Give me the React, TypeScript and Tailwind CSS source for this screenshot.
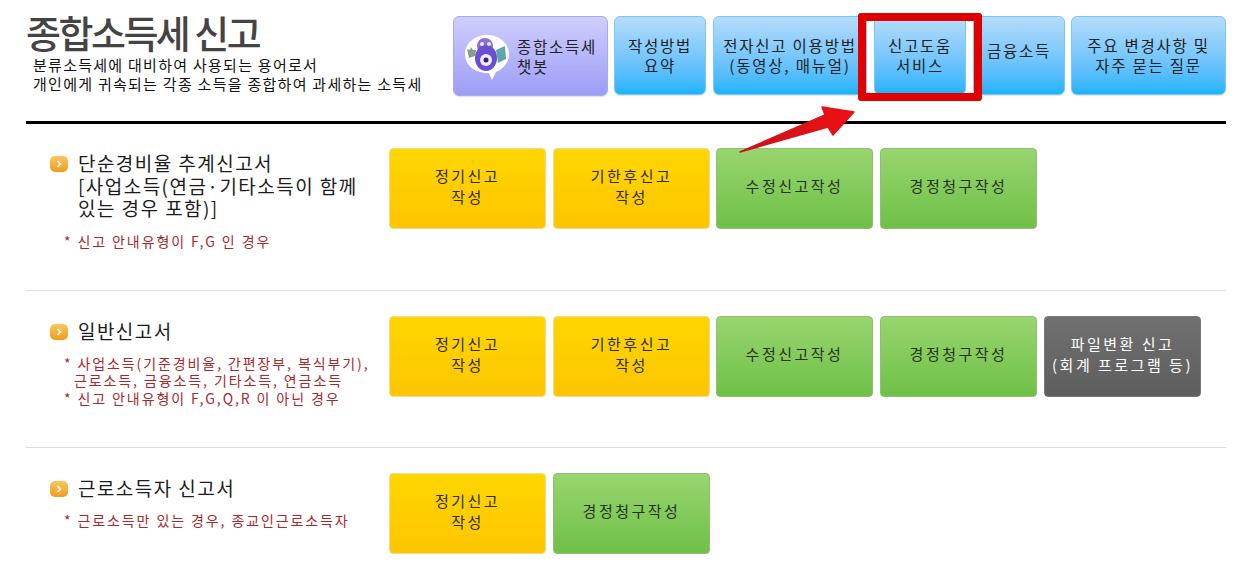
import { type ReactNode } from 'react';

const font = "font-['Noto_Sans_CJK_KR','Liberation_Sans',sans-serif]";

const topBlue = 'border-[#7cc8ee] from-[#b5dcfb] to-[#17b2fb]';

const variants = {
  yellow: 'border-[#f0dc90] from-[#ffd600] to-[#fdc500] text-[#2e2e20]',
  green: 'border-[#8fbf72] from-[#98d56f] to-[#6fc047] text-[#24341c]',
  gray: 'border-[#777777] from-[#707070] to-[#5e5e5e] text-white',
};

function TopButton({ width, className, children }: { width: string; className?: string; children: ReactNode }) {
  return (
    <div
      className={`flex h-[79px] shrink-0 items-center justify-center rounded-md border bg-linear-to-b pb-[2px] text-center text-[15.5px] leading-[20px] tracking-[1.75px] text-[#222222] shadow-[0_1px_1px_rgba(0,0,0,0.12)] ${width} ${className ?? topBlue}`}
    >
      <div>{children}</div>
    </div>
  );
}

function ActionButton({ kind, className, children }: { kind: keyof typeof variants; className?: string; children: ReactNode }) {
  return (
    <div
      className={`flex h-[81px] w-[157px] shrink-0 items-center justify-center rounded-[4px] border bg-linear-to-b pb-[6px] text-center text-[15px] leading-[21px] tracking-[2.5px] ${variants[kind]} ${className ?? ''}`}
    >
      <div>{children}</div>
    </div>
  );
}

function Heading({ children }: { children: ReactNode }) {
  return (
    <div className="flex items-start gap-[10px] pl-6">
      <span className="mt-2 flex h-[16px] w-[18px] shrink-0 items-center justify-center rounded-[5px] bg-linear-to-b from-[#fcc65c] to-[#f09c1c]">
        <svg width="8" height="8" viewBox="0 0 8 8" fill="none" stroke="#fff" strokeWidth="1.6">
          <path d="M2.5 1 5.5 4 2.5 7" />
        </svg>
      </span>
      <div className="mt-1 text-[19px] leading-[22.5px] tracking-[1.45px] text-[#1c1c1c]">{children}</div>
    </div>
  );
}

function Note({ className, children }: { className?: string; children: ReactNode }) {
  return <div className={`pl-[38px] text-[14px] leading-[17.5px] tracking-[1.9px] text-[#a8282c] ${className ?? ''}`}>{children}</div>;
}

function Mascot() {
  return (
    <svg width="48" height="50" viewBox="0 0 48 50" className="shrink-0">
      <path d="M24 4c12 0 22 8 22 19 0 9-6 15-13 18l-4 8-3-7C11 42 2 34 2 23 2 12 12 4 24 4z" fill="#fff" />
      <path d="M4 18l3 1 1-3 2 3 3 0-1 6-6 2z" fill="#8d9a86" />
      <path d="M33 19l9-4 1 13-8 4z" fill="#5fa6a8" />
      <circle cx="22" cy="15" r="8" fill="#8a6fd8" />
      <ellipse cx="23" cy="27" rx="11" ry="13" fill="#6a4fd0" />
      <circle cx="19" cy="13" r="2" fill="#e9e6fb" />
      <circle cx="26" cy="13" r="2" fill="#e9e6fb" />
      <circle cx="23" cy="29" r="6" fill="#efeafc" />
      <circle cx="23" cy="29" r="2.5" fill="#33236f" />
    </svg>
  );
}

export default function App() {
  return (
    <div className={`relative h-[565px] w-[1237px] overflow-hidden bg-white pl-[26px] pr-[11px] ${font}`}>
      <header className="flex h-[121px] pt-4">
        <div className="w-[427px] shrink-0">
          <h1 className="-mt-[6px] text-[38px] leading-[44px] font-medium tracking-[-2.5px] text-[#444444]">종합소득세 신고</h1>
          <div className="mt-px pl-[7px] text-[15px] leading-[19px] tracking-[1.27px] whitespace-nowrap text-[#111111]">
            <div>분류소득세에 대비하여 사용되는 용어로서</div>
            <div>개인에게 귀속되는 각종 소득을 종합하여 과세하는 소득세</div>
          </div>
        </div>
        <div className="flex items-start">
          <div className="flex h-[80px] w-[155px] shrink-0 items-center gap-[6px] rounded-md border border-[#a9a9ec] bg-linear-to-b from-[#cfcdfc] to-[#9d9df6] pl-[9px] text-[15.5px] leading-[20px] tracking-[1.75px] whitespace-nowrap text-[#222222] shadow-[0_1px_1px_rgba(0,0,0,0.12)]">
            <Mascot />
            <div>
              종합소득세
              <br />
              챗봇
            </div>
          </div>
          <TopButton width="ml-[6px] w-[92px]">
            작성방법
            <br />
            요약
          </TopButton>
          <TopButton width="ml-[7px] w-[154px]">
            전자신고 이용방법
            <br />
            (동영상, 매뉴얼)
          </TopButton>
          <TopButton width="ml-[7px] w-[92px]">
            신고도움
            <br />
            서비스
          </TopButton>
          <TopButton width="ml-[7px] w-[92px]">
            <span className="relative -top-[5px]">금융소득</span>
          </TopButton>
          <TopButton width="ml-[6px] w-[155px]">
            주요 변경사항 및
            <br />
            자주 묻는 질문
          </TopButton>
        </div>
      </header>
      <div className="h-[3px] bg-black" />

      <section className="flex h-[167px] items-start border-b border-[#dddddd] pt-[24px]">
        <div className="w-[363px] shrink-0">
          <Heading>
            단순경비율 추계신고서
            <br />
            [사업소득(연금·기타소득이 함께
            <br />
            있는 경우 포함)]
          </Heading>
          <Note className="mt-[13px]">* 신고 안내유형이 F,G 인 경우</Note>
        </div>
        <div className="flex gap-[7px]">
          <ActionButton kind="yellow">
            정기신고
            <br />
            작성
          </ActionButton>
          <ActionButton kind="yellow">
            기한후신고
            <br />
            작성
          </ActionButton>
          <ActionButton kind="green" className="-ml-px">
            수정신고작성
          </ActionButton>
          <ActionButton kind="green">경정청구작성</ActionButton>
        </div>
      </section>

      <section className="flex h-[157px] items-start border-b border-[#dddddd] pt-[25px]">
        <div className="w-[363px] shrink-0">
          <Heading>일반신고서</Heading>
          <Note className="mt-[12px]">
            * 사업소득(기준경비율, 간편장부, 복식부기),
            <br />
            <span className="pl-[10px]">근로소득, 금융소득, 기타소득, 연금소득</span>
            <br />* 신고 안내유형이 F,G,Q,R 이 아닌 경우
          </Note>
        </div>
        <div className="flex gap-[7px]">
          <ActionButton kind="yellow">
            정기신고
            <br />
            작성
          </ActionButton>
          <ActionButton kind="yellow">
            기한후신고
            <br />
            작성
          </ActionButton>
          <ActionButton kind="green" className="-ml-px">
            수정신고작성
          </ActionButton>
          <ActionButton kind="green">경정청구작성</ActionButton>
          <ActionButton kind="gray">
            파일변환 신고
            <br />
            (회계 프로그램 등)
          </ActionButton>
        </div>
      </section>

      <section className="flex items-start pt-[25px]">
        <div className="w-[363px] shrink-0">
          <Heading>근로소득자 신고서</Heading>
          <Note className="mt-[12px]">* 근로소득만 있는 경우, 종교인근로소득자</Note>
        </div>
        <div className="flex gap-[7px]">
          <ActionButton kind="yellow">
            정기신고
            <br />
            작성
          </ActionButton>
          <ActionButton kind="green">경정청구작성</ActionButton>
        </div>
      </section>

      {/* 빨간 강조 표시 */}
      <div className="absolute top-[13px] left-[858px] h-[88px] w-[124px] rounded-[3px] border-[8px] border-[#e00000]" />
      <svg className="absolute top-0 left-0" width="1237" height="565" viewBox="0 0 1237 565" fill="none">
        <defs>
          <linearGradient id="arrow" x1="740" y1="152" x2="855" y2="112" gradientUnits="userSpaceOnUse">
            <stop offset="0" stopColor="#c8141a" />
            <stop offset="1" stopColor="#ee0f14" />
          </linearGradient>
        </defs>
        <path
          d="M740 152 825 115 822 107 854 112 833 135 828 127Z"
          fill="url(#arrow)"
          stroke="url(#arrow)"
          strokeWidth="1.5"
          strokeLinejoin="round"
        />
      </svg>
    </div>
  );
}
